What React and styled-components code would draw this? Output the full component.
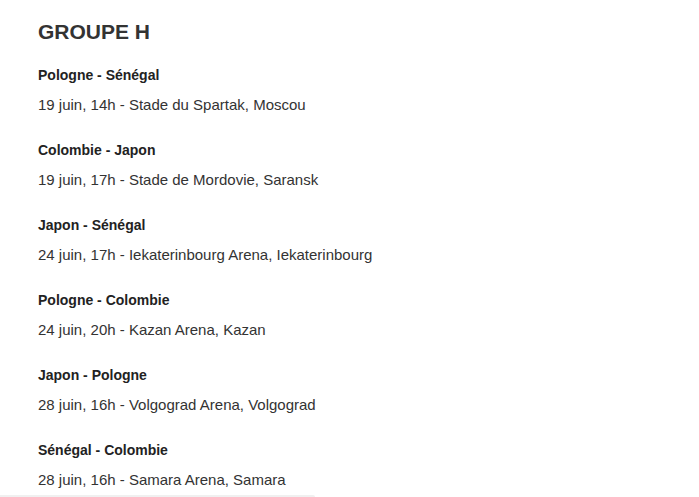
import React from "react";
import styled, { createGlobalStyle } from "styled-components";

const GlobalStyle = createGlobalStyle`
  body {
    margin: 0;
    background: #fff;
    font-family: "Liberation Sans", Arial, sans-serif;
  }
`;

const Page = styled.main`
  display: flex;
  flex-direction: column;
  padding: 17px 0 0 38px;
  height: 497px;
  box-sizing: border-box;
  overflow: hidden;
`;

const GroupTitle = styled.h2`
  margin: 0 0 13px;
  font-size: 21px;
  line-height: 30px;
  font-weight: bold;
  color: #333;
`;

const Match = styled.section`
  display: flex;
  flex-direction: column;
  margin-bottom: 15px;

  &:last-of-type {
    margin-bottom: 0;
  }
`;

const Teams = styled.p`
  margin: 0;
  font-size: 14px;
  line-height: 30px;
  font-weight: bold;
  color: #222;
`;

const Details = styled.p`
  margin: 0;
  font-size: 15px;
  line-height: 30px;
  color: #333;
`;

const ScrollTrack = styled.div`
  margin-left: -38px;
  width: 315px;
  height: 6px;
  background: #f0f0f0;
  border-radius: 0 3px 0 0;
`;

const matches = [
  { teams: "Pologne - Sénégal", info: "19 juin, 14h - Stade du Spartak, Moscou" },
  { teams: "Colombie - Japon", info: "19 juin, 17h - Stade de Mordovie, Saransk" },
  { teams: "Japon - Sénégal", info: "24 juin, 17h - Iekaterinbourg Arena, Iekaterinbourg" },
  { teams: "Pologne - Colombie", info: "24 juin, 20h - Kazan Arena, Kazan" },
  { teams: "Japon - Pologne", info: "28 juin, 16h - Volgograd Arena, Volgograd" },
  { teams: "Sénégal - Colombie", info: "28 juin, 16h - Samara Arena, Samara" },
];

const App = () => (
  <>
    <GlobalStyle />
    <Page>
      <GroupTitle>GROUPE H</GroupTitle>
      {matches.map((m) => (
        <Match key={m.teams}>
          <Teams>{m.teams}</Teams>
          <Details>{m.info}</Details>
        </Match>
      ))}
      <ScrollTrack />
    </Page>
  </>
);

export default App;
